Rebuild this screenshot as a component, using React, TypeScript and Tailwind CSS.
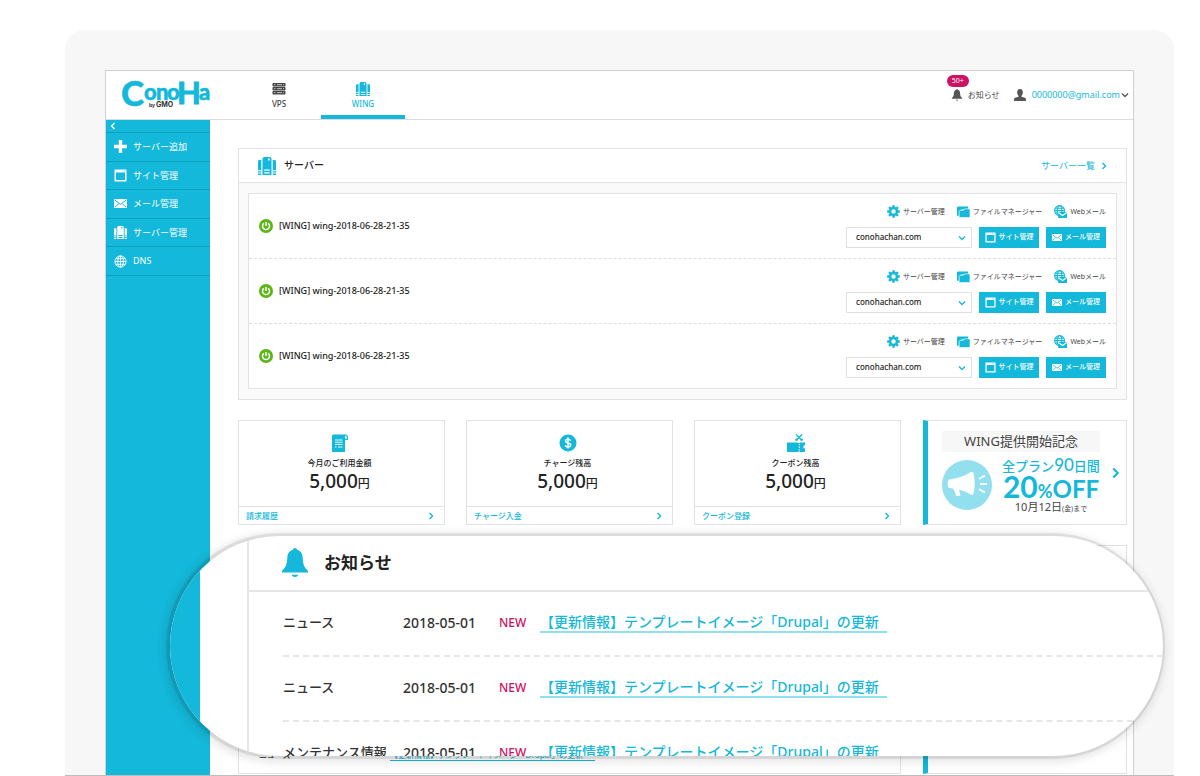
import React from "react";

type IconProps = { className?: string };

const ServerIcon = ({ className }: IconProps) => (
  <svg viewBox="0 0 18 18" className={className} fill="currentColor" aria-hidden="true">
    <path fillRule="evenodd" d="M4.500 1.500 5.700 0h6.600l1.200 1.500V18H4.500zM10 1.500v2h1.700v-2zM6.200 12.500v1.200h5.600v-1.200zM6.200 15.300v1.200h5.600v-1.200z" />
    <path d="M0 4 1 3h2.300v10.300H0zM0 14.300h3.300v1.200H0zM0 16.600h3.300V18H0zM14.700 3H17l1 1v9.300h-3.300zM14.700 14.300H18v1.200h-3.300zM14.700 16.600H18V18h-3.300z" />
  </svg>
);

const RackIcon = ({ className }: IconProps) => (
  <svg viewBox="0 0 14 14" className={className} aria-hidden="true">
    {[0, 4, 8].map((y) => (
      <g key={y}>
        <rect x="0.500" y={y + 1} width="13" height="3.500" rx="0.800" fill="currentColor" />
        <path d={`M2 ${y + 2.7}h1.500M5 ${y + 2.7}h5M11 ${y + 2.7}h1`} stroke="#fff" strokeWidth="0.700" />
      </g>
    ))}
  </svg>
);

const PlusIcon = ({ className }: IconProps) => (
  <svg viewBox="0 0 13 13" className={className} aria-hidden="true">
    <path d="M6.500 0v13M0 6.500h13" stroke="currentColor" strokeWidth="3.400" />
  </svg>
);

const SiteIcon = ({ className }: IconProps) => (
  <svg viewBox="0 0 13 13" className={className} aria-hidden="true">
    <path fill="currentColor" fillRule="evenodd" d="M0.500 0.500h12v12h-12zM2 3.500V11h9V3.500z" />
    <path d="M8.500 2h0.800M10.200 2h0.800" stroke="#14b8da" strokeWidth="0.700" />
  </svg>
);

const MailIcon = ({ className }: IconProps) => (
  <svg viewBox="0 0 13 9" className={className} aria-hidden="true">
    <rect width="13" height="9" rx="0.800" fill="currentColor" />
    <path d="M1 1.200 6.500 5.400 12 1.200M1 8 4.800 4.600M12 8 8.200 4.600" fill="none" stroke="#14b8da" strokeWidth="1" />
  </svg>
);

const GlobeIcon = ({ className }: IconProps) => (
  <svg viewBox="0 0 14 14" className={className} fill="none" stroke="currentColor" strokeWidth="1" aria-hidden="true">
    <circle cx="7" cy="7" r="6" />
    <ellipse cx="7" cy="7" rx="3" ry="6" />
    <path d="M7 1v12M1 7h12M2 4h10M2 10h10" />
  </svg>
);

const ChevronIcon = ({ className }: IconProps) => (
  <svg viewBox="0 0 6 8" className={className} fill="none" stroke="currentColor" strokeWidth="1.400" aria-hidden="true">
    <path d="m1.500 1 3 3-3 3" />
  </svg>
);

const DownIcon = ({ className }: IconProps) => (
  <svg viewBox="0 0 8 6" className={className} fill="none" stroke="currentColor" strokeWidth="1.300" aria-hidden="true">
    <path d="m1 1.500 3 3 3-3" />
  </svg>
);

const GearIcon = ({ className }: IconProps) => (
  <svg viewBox="0 0 14 14" className={className} fill="none" stroke="currentColor" aria-hidden="true">
    <circle cx="7" cy="7" r="3.700" strokeWidth="2.600" />
    {[0, 45, 90, 135].map((a) => (
      <path key={a} transform={`rotate(${a} 7 7)`} d="M7 0.200v2.600M7 11.200v2.600" strokeWidth="2.600" />
    ))}
  </svg>
);

const FolderIcon = ({ className }: IconProps) => (
  <svg viewBox="0 0 14 12" className={className} aria-hidden="true">
    <path d="M0 10V1l1-1h11v2.500L3.500 3.800 2 10z" fill="currentColor" />
    <path d="M2.300 12V5.200L3.300 4H7l1-1.300h6V12z" fill="currentColor" stroke="#fff" strokeWidth="0.700" />
  </svg>
);

const WebmailIcon = ({ className }: IconProps) => (
  <svg viewBox="0 0 14 14" className={className} aria-hidden="true">
    <g fill="none" stroke="currentColor" strokeWidth="1.200">
      <circle cx="6" cy="6" r="5.300" />
      <ellipse cx="6" cy="6" rx="2.500" ry="5.200" />
      <path d="M0.800 6h10.400M1.500 3.500h9M1.500 8.500h9" />
    </g>
    <path d="M4.500 7.500h9.500V14H4.500z" fill="currentColor" />
    <path d="m4.500 8 4.700 3.300L14 8" fill="none" stroke="#fff" strokeWidth="1.200" />
  </svg>
);

const PowerIcon = ({ className }: IconProps) => (
  <svg viewBox="0 0 14 14" className={className} aria-hidden="true">
    <circle cx="7" cy="7" r="7" fill="#5cb615" />
    <path d="M7 3v4M4.800 4.400a3.500 3.500 0 1 0 4.400 0" fill="none" stroke="#fff" strokeWidth="1.500" />
  </svg>
);

const BellIcon = ({ className }: IconProps) => (
  <svg viewBox="0 0 26 30" className={className} fill="currentColor" aria-hidden="true">
    <path d="M13 0c1.200 0 1.800 0.800 2 1.800 4 1.200 5.500 4 5.700 8 .3 6 1.300 9.700 4.600 12.200.9.900.7 1.600.7 2.500H0c0-.9-.2-1.600.7-2.500C4 19.500 5 15.800 5.300 9.800c.2-4 1.700-6.800 5.700-8C11.200.8 11.800 0 13 0z" />
    <path d="M9.800 26.800h6.400c-.3 1.500-1.600 2.200-3.200 2.200s-2.900-.7-3.200-2.200z" />
  </svg>
);

const UserIcon = ({ className }: IconProps) => (
  <svg viewBox="0 0 12 12" className={className} fill="currentColor" aria-hidden="true">
    <ellipse cx="6" cy="3.400" rx="2.800" ry="3.400" />
    <path d="M4.500 6h3v1.800l3.500 1c.8.300 1 1 1 3.200H0c0-2.200.2-2.900 1-3.200l3.500-1z" />
  </svg>
);

const BillIcon = ({ className }: IconProps) => (
  <svg viewBox="0 0 18 18" className={className} aria-hidden="true">
    <path d="M1 18V1.500L2 .5h12V18z" fill="currentColor" />
    <path d="M13.500.9c2 0 2.800.6 2.800 2v2.400h-2.500" fill="none" stroke="currentColor" strokeWidth="1.200" />
    <path d="M4 6h7.500M4 8.200h7.500M4 10.400h7.500M4 13h1.500M7 13h4.500" stroke="#fff" strokeWidth="0.900" />
  </svg>
);

const CoinIcon = ({ className }: IconProps) => (
  <svg viewBox="0 0 18 18" className={className} aria-hidden="true">
    <circle cx="9" cy="9" r="8.500" fill="currentColor" />
    <path d="M11.600 6.700c-.4-1-1.400-1.500-2.600-1.500-1.500 0-2.500.7-2.500 1.800 0 2.700 5.200 1.200 5.200 4 0 1.200-1.100 1.900-2.700 1.900-1.400 0-2.400-.6-2.800-1.700M9 3.500v11" fill="none" stroke="#fff" strokeWidth="1.500" />
  </svg>
);

const CouponIcon = ({ className }: IconProps) => (
  <svg viewBox="0 0 18 18" className={className} aria-hidden="true">
    <path d="M0 8.500h11l1 1 1-1h5v2.700a1.700 1.700 0 0 0 0 3.400V18h-5l-1-1-1 1H0z" fill="currentColor" />
    <path d="M12.300 10v7" stroke="#fff" strokeWidth="0.900" strokeDasharray="1.500 1" />
    <path d="m9.500 6 5.500-5.500M14.500 6 9 .5" stroke="currentColor" strokeWidth="1.400" />
    <circle cx="9.500" cy="5.800" r="1.200" fill="currentColor" />
    <circle cx="14.700" cy="5.800" r="1.200" fill="currentColor" />
  </svg>
);

const MegaphoneIcon = ({ className }: IconProps) => (
  <svg viewBox="0 0 50 50" className={className} aria-hidden="true">
    <circle cx="25" cy="25" r="25" fill="#92dfee" />
    <path d="M7 19.500c6-.8 15-3 22-7.500l2-.3c2.300 7 2.300 16.500 0 23.300l-2-.3c-4-2.500-8.500-4.200-12-5l1.500 5.800-4 .7-3-7.500-4.500-.7c-1.800-1.200-1.800-7 0-8.500z" fill="#fff" />
    <path d="m37 19 6-3.500M38 24h7M37 29l6 3.500" stroke="#fff" strokeWidth="2" />
  </svg>
);

const Logo = () => (
  <svg viewBox="0 0 92 36" className="h-9 w-[92px] overflow-visible" role="img" aria-label="ConoHa by GMO">
    <g fill="#14b8da" stroke="#14b8da" fontFamily="Lato, sans-serif" fontWeight="900">
      <text x="-1" y="27" fontSize="35" strokeWidth="0.500">C</text>
      <text x="22 34 45" y="21" fontSize="22" strokeWidth="0.500">ono</text>
      <text x="55" y="25" fontSize="31" fontWeight="700" strokeWidth="1">H</text>
      <text x="77" y="21" fontSize="22" strokeWidth="0.500">a</text>
    </g>
    <text x="27" y="28" fontSize="5" fontWeight="700" fontFamily="Inter, sans-serif" fill="#333">by</text>
    <text x="34" y="28" fontSize="7" fontWeight="700" fontFamily="Inter, sans-serif" fill="#333">GMO</text>
  </svg>
);

const menu = [
  { label: "サーバー追加", Icon: PlusIcon, size: "size-[13px]" },
  { label: "サイト管理", Icon: SiteIcon, size: "size-[13px]" },
  { label: "メール管理", Icon: MailIcon, size: "h-[9px] w-[13px]" },
  { label: "サーバー管理", Icon: ServerIcon, size: "size-[13px]" },
  { label: "DNS", Icon: GlobeIcon, size: "size-[13px]" },
];

const cards = [
  { label: "今月のご利用金額", link: "請求履歴", Icon: BillIcon },
  { label: "チャージ残高", link: "チャージ入金", Icon: CoinIcon },
  { label: "クーポン残高", link: "クーポン登録", Icon: CouponIcon },
];

const news = ["ニュース", "ニュース", "メンテナンス情報"];
const newsTitle = "【更新情報】テンプレートイメージ「Drupal」の更新";

const ServerRow = ({ id }: { id: number }) => (
  <li className="flex h-[65px] items-center justify-between border-b border-dashed border-[#dedede] px-2.5 last:h-16 last:border-b-0">
    <div className="flex items-center gap-1.5 text-[9px]">
      <PowerIcon className="size-3.5" />
      <span className="font-medium">[WING] wing-2018-06-28-21-35</span>
    </div>
    <div className="flex flex-col items-end gap-2">
      <div className="flex items-center gap-3 text-[7px] leading-[14px] text-[#444]">
        <a href="#server" className="flex items-center gap-[3px]">
          <GearIcon className="size-[13px] text-[#14b8da]" />
          サーバー管理
        </a>
        <a href="#files" className="flex items-center gap-[3px]">
          <FolderIcon className="h-3 w-[13px] text-[#14b8da]" />
          ファイルマネージャー
        </a>
        <a href="#webmail" className="flex items-center gap-[3px]">
          <WebmailIcon className="size-[13px] text-[#14b8da]" />
          Webメール
        </a>
      </div>
      <div className="flex items-center gap-[7px] text-[7px]">
        <div className="relative w-[126px]">
          <select aria-label={`ドメイン ${id}`} className="block h-[21px] w-full appearance-none border border-[#e0e0e0] bg-white pl-[9px] text-[8px] font-medium text-[#222]">
            <option>conohachan.com</option>
          </select>
          <DownIcon className="pointer-events-none absolute top-2 right-1.5 h-[6px] w-2 text-[#14b8da]" />
        </div>
        <button type="button" className="flex h-[21px] w-[60px] items-center justify-center gap-[3px] bg-[#14b8da] font-medium text-white">
          <SiteIcon className="size-[11px]" />
          サイト管理
        </button>
        <button type="button" className="flex h-[21px] w-[60px] items-center justify-center gap-[3px] bg-[#14b8da] font-medium text-white">
          <MailIcon className="h-[7px] w-2.5" />
          メール管理
        </button>
      </div>
    </div>
  </li>
);

const NewsLens = () => (
  <section aria-label="お知らせ" className="absolute top-[536px] right-[37px] left-[170px] flex h-[220px] overflow-hidden rounded-full bg-white text-[#333] shadow-[-1px_0_0_3px_rgba(0,0,0,0.08),-2px_2px_10px_4px_rgba(0,0,0,0.11)]">
    <div className="w-[30px] shrink-0 bg-[#14b8da]" />
    <div className="ml-[47px] min-w-0 flex-1 border-l-2 border-[#e6e6e6]">
      <header className="flex h-14 items-center gap-4 border-b-2 border-[#e6e6e6] pl-[33px]">
        <BellIcon className="h-[30px] w-[26px] text-[#14b8da]" />
        <h2 className="text-[17px] font-semibold text-[#222]">お知らせ</h2>
      </header>
      <ul className="ml-[34px]">
        {news.map((kind, i) => (
          <li key={i} className="flex h-[65px] items-center border-b-2 border-dashed border-[#e6e6e6] pb-0.5 text-sm whitespace-nowrap">
            <span className="w-[120px] text-[13px] font-medium">{kind}</span>
            <time dateTime="2018-05-01" className="w-24 font-medium">2018-05-01</time>
            <span className="w-[41px] text-xs font-medium text-[#cc1262]">NEW</span>
            <a href="#news" className="border-b-2 border-[#8fe0ef] pr-2 leading-[18px] font-medium text-[#14b8da]">{newsTitle}</a>
          </li>
        ))}
      </ul>
    </div>
  </section>
);

export default function App() {
  return (
    <div className="relative flex min-h-screen flex-col overflow-hidden bg-white pt-[30px] pr-[26px] pl-[65px] font-['Noto_Sans','Noto_Sans_CJK_JP',sans-serif] text-[#222]" lang="ja">
      <div className="flex flex-1 flex-col rounded-t-[20px] border-b border-[#bdbdbd] bg-[#f7f7f7] px-10 pt-10">
        <div className="flex flex-1 flex-col border border-b-0 border-[#d0d0d0] bg-white">
          <header className="flex h-[49px] items-stretch border-b border-[#dcdcdc]">
            <a href="#home" className="w-[131px] pt-2 pl-4">
              <Logo />
            </a>
            <nav className="flex text-[8px] leading-3 font-medium">
              <a href="#vps" className="flex w-[84px] flex-col items-center gap-0.5 pt-[11px] text-[#444]">
                <RackIcon className="size-3.5" />
                VPS
              </a>
              <a href="#wing" className="flex w-[84px] flex-col items-center gap-0.5 border-b-4 border-[#14b8da] pt-[11px] text-[#14b8da]">
                <ServerIcon className="size-3.5" />
                WING
              </a>
            </nav>
            <div className="ml-auto flex items-center pr-1 text-[8px]">
              <a href="#notices" className="relative flex items-center gap-[5px] text-[#444]">
                <BellIcon className="h-3 w-3 text-[#555]" />
                お知らせ
                <span className="absolute bottom-3.5 -left-1 flex h-3 w-[22px] items-center justify-center rounded-full bg-[#cc1262] text-[7px] text-white">50+</span>
              </a>
              <button type="button" className="ml-3.5 flex items-center text-[#14b8da]">
                <UserIcon className="mr-1.5 size-3 text-[#555]" />
                <span className="text-[9px]">0000000@gmail.com</span>
                <DownIcon className="ml-px h-[6px] w-2 text-[#555]" />
              </button>
            </div>
          </header>
          <div className="flex flex-1">
            <aside className="w-[104px] shrink-0 bg-[#14b8da] text-white">
              <button type="button" aria-label="メニューを閉じる" className="flex h-[13px] w-full items-center border-b border-[#0fa0c0] pl-1">
                <ChevronIcon className="h-2 w-1.5 rotate-180" />
              </button>
              <nav className="flex h-[143px] flex-col text-[9px]">
                {menu.map(({ label, Icon, size }) => (
                  <a key={label} href="#menu" className="flex flex-1 items-center gap-1.5 border-b border-[#0fa0c0] pl-2">
                    <Icon className={size} />
                    {label}
                  </a>
                ))}
              </nav>
            </aside>
            <main className="flex min-w-0 flex-1 flex-col pt-7 pr-1.5 pl-7">
              <section className="border border-[#e2e2e2] bg-[#fafafa]">
                <header className="flex h-[34px] items-center border-b border-[#e2e2e2] bg-white px-[19px]">
                  <ServerIcon className="size-[18px] text-[#14b8da]" />
                  <h1 className="ml-2 text-[10px] font-medium">サーバー</h1>
                  <a href="#servers" className="ml-auto flex items-center gap-1.5 text-[9px] text-[#14b8da]">
                    サーバー一覧
                    <ChevronIcon className="h-2 w-1.5" />
                  </a>
                </header>
                <div className="px-[9px] py-2.5">
                  <ul className="border border-[#e2e2e2] bg-white">
                    {[1, 2, 3].map((id) => (
                      <ServerRow key={id} id={id} />
                    ))}
                  </ul>
                </div>
              </section>
              <div className="mt-5 flex gap-[22px]">
                <div className="grid flex-1 grid-cols-3 gap-[21px]">
                  {cards.map(({ label, link, Icon }) => (
                    <section key={label} className="flex h-[105px] flex-col border border-[#e2e2e2]">
                      <div className="flex flex-1 flex-col items-center pt-[13px] pr-1">
                        <Icon className="size-[18px] text-[#14b8da]" />
                        <h2 className="mt-[3px] text-[8px] leading-4 font-medium">{label}</h2>
                        <p className="text-[19px] leading-5 font-medium">
                          5,000<span className="text-xs">円</span>
                        </p>
                      </div>
                      <a href="#detail" className="flex h-[18px] items-center justify-between border-t border-[#e2e2e2] pr-2.5 pl-[7px] text-[8px] font-medium text-[#14b8da]">
                        {link}
                        <ChevronIcon className="h-2 w-1.5" />
                      </a>
                    </section>
                  ))}
                </div>
                <a href="#campaign" className="flex h-[105px] w-[204px] items-center border border-l-[5px] border-[#e2e2e2] border-l-[#14b8da] pr-1.5 pl-3.5">
                  <div className="w-[158px]">
                    <p className="h-[21px] bg-[#f7f7f7] text-center text-[13px] leading-[21px] text-[#444]">WING提供開始記念</p>
                    <div className="flex items-center justify-between pt-1">
                      <MegaphoneIcon className="size-[50px]" />
                      <div className="flex w-[98px] flex-col items-center whitespace-nowrap text-[#14b8da]">
                        <p className="h-[17px] text-[13px] leading-[17px] font-medium">
                          全プラン<span className="font-['Lato'] text-[17px] leading-none">90</span>日間
                        </p>
                        <p className="h-[26px] font-['Lato'] text-2xl leading-[26px] font-bold">
                          <span className="text-[30px]">20</span>
                          <span className="text-lg">%</span>OFF
                        </p>
                        <p className="h-[15px] text-[11px] leading-[15px] text-[#444]">
                          10月12日<span className="text-[7px]">(金)まで</span>
                        </p>
                      </div>
                    </div>
                  </div>
                  <ChevronIcon className="ml-auto h-3 w-[9px] text-[#14b8da]" />
                </a>
              </div>
              <div className="mt-5 flex flex-1 gap-[22px] pb-px">
                <section className="flex flex-1 flex-col justify-end border border-[#e2e2e2] pb-3 pl-5 text-[8px]">
                  <div className="flex">
                    <span className="w-[131px]">ニュース</span>
                    <a href="#news" className="border-b border-[#14b8da] pr-3 leading-[11px] text-[#14b8da]">{newsTitle}</a>
                  </div>
                </section>
                <section className="w-[204px] border border-l-[5px] border-[#e2e2e2] border-l-[#14b8da]" />
              </div>
            </main>
          </div>
        </div>
      </div>
      <NewsLens />
    </div>
  );
}
